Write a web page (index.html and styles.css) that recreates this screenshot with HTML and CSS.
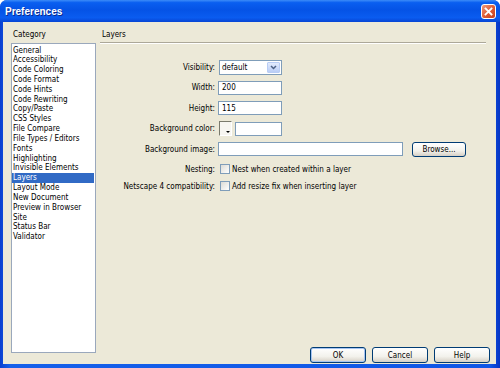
FILE: index.html
```html
<!DOCTYPE html>
<html lang="en">

<head>
    <meta charset="UTF-8">
    <title>Preferences</title>
    <link rel="stylesheet" href="styles.css">
</head>

<body>

    <div class="window">

        <div class="titlebar">
            <span class="title">Preferences</span>
            <span class="close">
                <svg width="9" height="9" viewBox="0 0 9 9">
                    <path d="M1.5 1.5 L7.5 7.5 M7.5 1.5 L1.5 7.5" stroke="#fff" stroke-width="1.8" stroke-linecap="square" />
                </svg>
            </span>
        </div>

        <div class="client">

            <div class="category">
                <div class="cat-label">Category</div>
                <ul class="cat-list">
                    <li>General</li>
                    <li>Accessibility</li>
                    <li>Code Coloring</li>
                    <li>Code Format</li>
                    <li>Code Hints</li>
                    <li>Code Rewriting</li>
                    <li>Copy/Paste</li>
                    <li>CSS Styles</li>
                    <li>File Compare</li>
                    <li>File Types / Editors</li>
                    <li>Fonts</li>
                    <li>Highlighting</li>
                    <li>Invisible Elements</li>
                    <li class="selected">Layers</li>
                    <li>Layout Mode</li>
                    <li>New Document</li>
                    <li>Preview in Browser</li>
                    <li>Site</li>
                    <li>Status Bar</li>
                    <li>Validator</li>
                </ul>
            </div>

            <div class="panel">
                <div class="panel-head">Layers</div>

                <div class="form">
                    <div class="row">
                        <label class="lbl">Visibility:</label>
                        <div class="combo">
                            <span class="combo-text">default</span>
                            <span class="combo-btn">
                                <svg width="7" height="5" viewBox="0 0 7 5">
                                    <path d="M1 1 L3.5 3.5 L6 1" fill="none" stroke="#4d6185" stroke-width="1.5" />
                                </svg>
                            </span>
                        </div>
                    </div>
                    <div class="row">
                        <label class="lbl">Width:</label>
                        <input class="field short" type="text" value="200">
                    </div>
                    <div class="row">
                        <label class="lbl">Height:</label>
                        <input class="field short" type="text" value="115">
                    </div>
                    <div class="row">
                        <label class="lbl">Background color:</label>
                        <span class="swatch"><span class="swatch-arrow"></span></span>
                        <input class="field color" type="text" value="">
                    </div>
                    <div class="row">
                        <label class="lbl">Background image:</label>
                        <input class="field long" type="text" value="">
                        <button class="btn browse">Browse...</button>
                    </div>
                    <div class="checks">
                        <div class="row check">
                            <label class="lbl">Nesting:</label>
                            <span class="box"></span>
                            <span class="opt">Nest when created within a layer</span>
                        </div>
                        <div class="row check">
                            <label class="lbl">Netscape 4 compatibility:</label>
                            <span class="box"></span>
                            <span class="opt">Add resize fix when inserting layer</span>
                        </div>
                    </div>
                </div>

                <div class="buttons">
                    <button class="btn default">OK</button>
                    <button class="btn">Cancel</button>
                    <button class="btn">Help</button>
                </div>
            </div>

        </div>
    </div>

</body>

</html>
```

FILE: styles.css
```css
body {
    margin: 0;
    background-color: #ffffff;
    font-family: "DejaVu Sans Condensed", "Liberation Sans", sans-serif;
    font-size: 8px;
    color: #000000;
}

.window {
    width: 500px;
    height: 368px;
    display: flex;
    flex-direction: column;
    background: linear-gradient(to right, #0a3fd0, #1560ea 2%, #0f56e6 98%, #0634c4);
    border-radius: 7px 7px 0 0;
    overflow: hidden;
}

/* barre de titre bleue */
.titlebar {
    height: 22px;
    flex: none;
    display: flex;
    align-items: center;
    justify-content: space-between;
    padding: 0 4px 0 5px;
    background: linear-gradient(#3c8cf8 0%, #0a5ff0 12%, #0553e6 45%, #0a5cf0 80%, #0745d4 100%);
}

.title {
    color: #ffffff;
    font-family: "Liberation Sans", Arial, sans-serif;
    font-weight: bold;
    font-size: 10px;
    text-shadow: 1px 1px 0 #0a2a8c;
}

.close {
    width: 13px;
    height: 13px;
    border: 1px solid #ffffff;
    border-radius: 3px;
    background: linear-gradient(135deg, #f0997a, #de5a33 55%, #c2401c);
    display: flex;
    justify-content: center;
    align-items: center;
}

.client {
    flex: 1;
    margin: 0 4px 4px 3px;
    background-color: #ece9d8;
    display: flex;
    gap: 4px;
    padding: 8px 6px 0 8px;
    min-height: 0;
}

/* colonne de gauche */
.category {
    width: 85px;
    display: flex;
    flex-direction: column;
}

.cat-label {
    line-height: 10px;
    padding-left: 2px;
}

.cat-list {
    flex: 1;
    list-style: none;
    margin: 3px 0 11px 0;
    padding: 1.5px 1px 0 0;
    background-color: #ffffff;
    border: 1px solid #9aa8bc;
}

.cat-list li {
    line-height: 9.84px;
    height: 9.84px;
    padding-left: 1px;
    white-space: nowrap;
}

.cat-list li.selected {
    background-color: #316ac5;
    color: #ffffff;
}

/* panneau de droite */
.panel {
    flex: 1;
    display: flex;
    flex-direction: column;
}

.panel-head {
    line-height: 10px;
    height: 12px;
    padding: 0 0 0 2px;
    margin-right: 4px;
    border-bottom: 1px solid #aca899;
    box-shadow: 0 1px 0 #ffffff;
}

.form {
    margin-top: 14px;
    display: flex;
    flex-direction: column;
}

.row {
    height: 20.5px;
    display: flex;
    align-items: center;
}

.checks {
    margin-top: 1px;
}

.row.check {
    height: 17px;
}

.lbl {
    width: 115px;
    flex: none;
    text-align: right;
    margin-right: 3px;
    white-space: nowrap;
}

.field {
    box-sizing: border-box;
    height: 14px;
    border: 1px solid #7f9db9;
    background-color: #ffffff;
    padding: 0 3px;
    margin: 0;
    font-family: inherit;
    font-size: 8px;
    outline: none;
}

.short {
    width: 64px;
}

.color {
    width: 47px;
}

.long {
    width: 185px;
}

.combo {
    box-sizing: border-box;
    width: 63px;
    height: 15px;
    margin-left: 1px;
    border: 1px solid #7f9db9;
    background-color: #ffffff;
    display: flex;
    align-items: stretch;
}

.combo-text {
    flex: 1;
    padding-left: 2px;
    line-height: 13px;
}

.combo-btn {
    width: 11px;
    margin: 1px;
    border: 1px solid #b9cdf5;
    border-radius: 1px;
    background: linear-gradient(#e2ebfd, #bacdf6);
    display: flex;
    justify-content: center;
    align-items: center;
}

.swatch {
    box-sizing: border-box;
    position: relative;
    width: 13px;
    height: 15px;
    margin: 0 3px 0 1px;
    border: 1px solid #7a7a6c;
    border-right-color: #ffffff;
    border-bottom-color: #ffffff;
    background-color: #f7f6f1;
}

/* petite flèche du sélecteur de couleur */
.swatch-arrow {
    position: absolute;
    right: 1px;
    bottom: 2px;
    width: 0;
    height: 0;
    border-left: 2px solid transparent;
    border-right: 2px solid transparent;
    border-top: 2px solid #000000;
}

.box {
    box-sizing: border-box;
    width: 10px;
    height: 10px;
    margin: 0 2px 0 2px;
    border: 1px solid #7f9db9;
    background: linear-gradient(135deg, #dcdbd5, #ffffff);
}

.opt {
    white-space: nowrap;
}

.btn {
    box-sizing: border-box;
    height: 15px;
    border: 1px solid #003c74;
    border-radius: 3px;
    background: linear-gradient(#ffffff, #f3f2ec 60%, #d6d0c5);
    font-family: inherit;
    font-size: 8px;
    color: #000000;
    padding: 0;
    margin: 0;
}

.browse {
    width: 54px;
    margin-left: 9px;
}

.buttons {
    margin-top: auto;
    margin-bottom: 1px;
    display: flex;
    justify-content: flex-end;
    gap: 6px;
}

.buttons .btn {
    width: 56px;
    height: 16px;
}

.btn.default {
    box-shadow: inset 0 0 0 1px #a6c4f2;
}
```
